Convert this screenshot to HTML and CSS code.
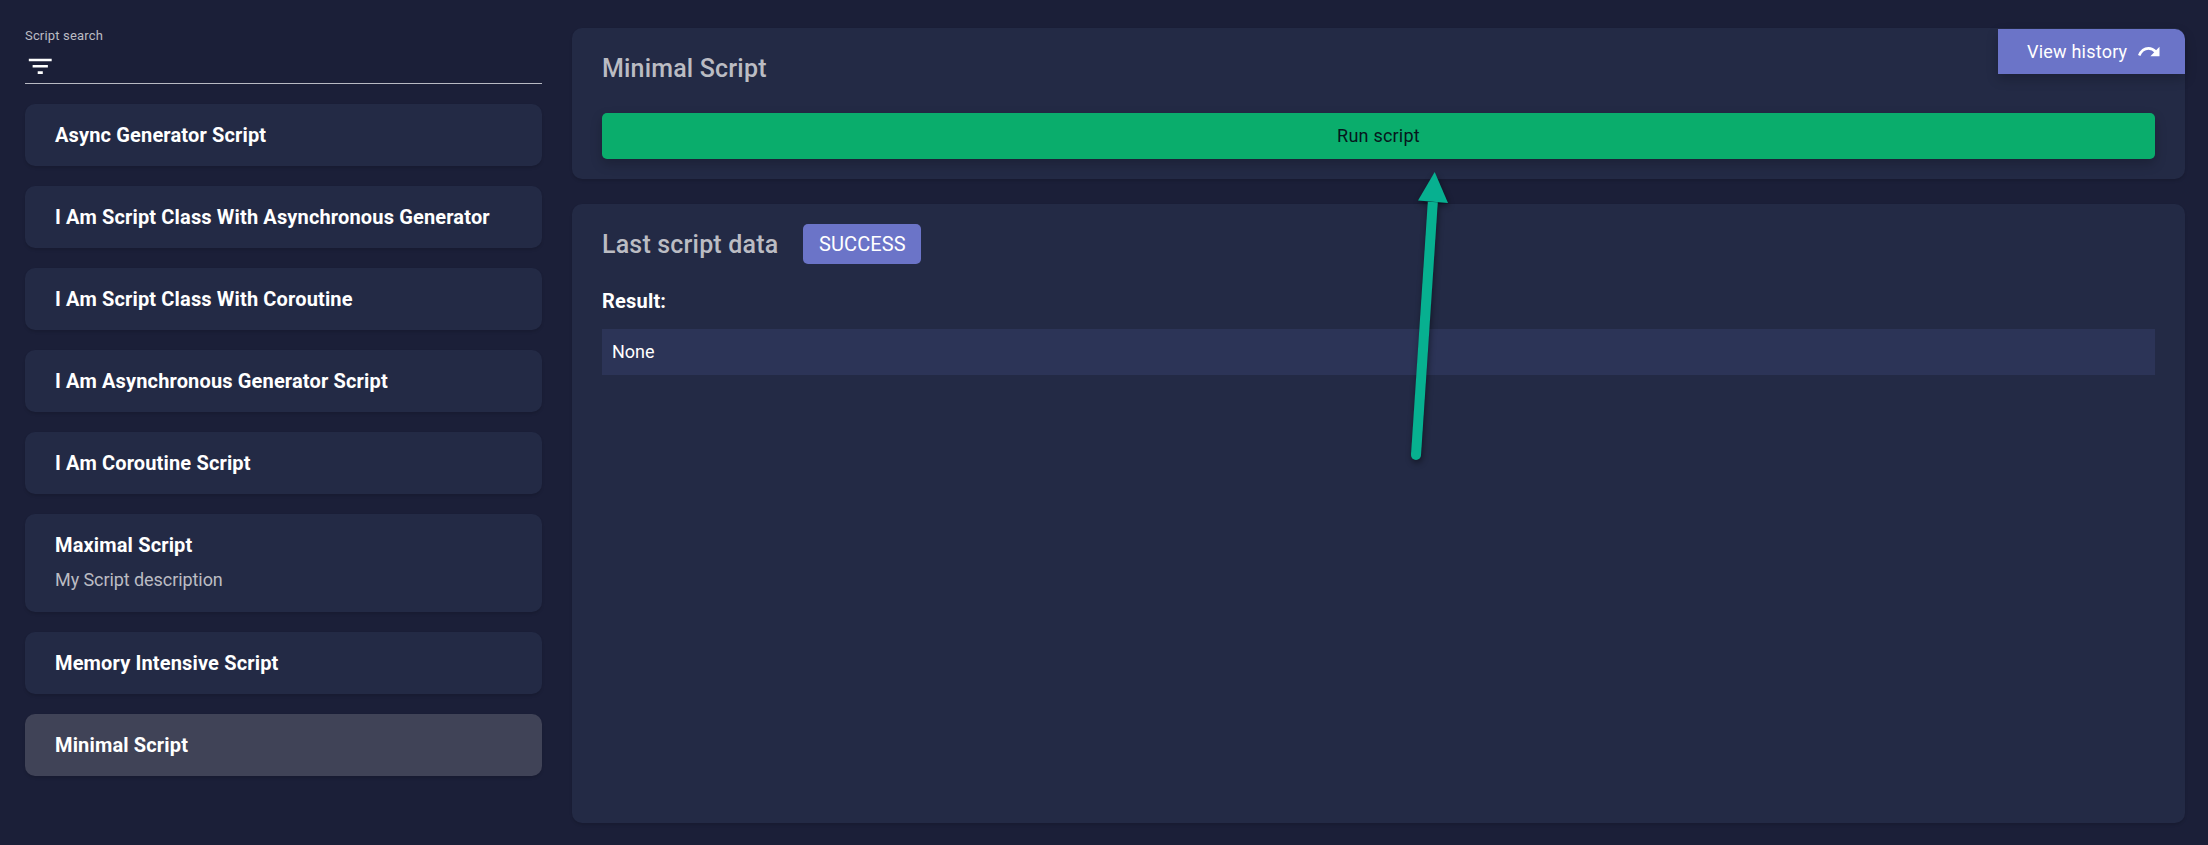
FILE: index.html
```html
<!DOCTYPE html>
<html lang="en">
<head>
<meta charset="utf-8">
<title>Scripts</title>
<link rel="stylesheet" href="styles.css">
</head>
<body>
<div class="page">
  <aside class="sidebar">
    <label class="search">
      <span class="search-label">Script search</span>
      <svg class="filter-icon" viewBox="0 0 24 24"><path d="M10 18h4v-2h-4v2zM3 6v2h18V6H3zm3 7h12v-2H6v2z"/></svg>
    </label>
    <nav class="scripts">
      <a class="script">Async Generator Script</a>
      <a class="script">I Am Script Class With Asynchronous Generator</a>
      <a class="script">I Am Script Class With Coroutine</a>
      <a class="script">I Am Asynchronous Generator Script</a>
      <a class="script">I Am Coroutine Script</a>
      <a class="script">Maximal Script<span class="description">My Script description</span></a>
      <a class="script">Memory Intensive Script</a>
      <a class="script selected">Minimal Script</a>
    </nav>
  </aside>
  <main class="content">
    <section class="panel run-panel">
      <h2 class="title">Minimal Script</h2>
      <button class="run">Run script</button>
      <button class="history"><span>View history</span><svg class="history-icon" viewBox="0 0 22 12"><path d="M1.2 9.6Q4.2 2.4 10.5 2.4Q14.5 2.4 18 6" fill="none" stroke="#fff" stroke-width="2.6"/><path d="M21.5 .8V10.3H12.4z" fill="#fff"/></svg></button>
    </section>
    <section class="panel result-panel">
      <header class="result-head"><h2 class="title">Last script data</h2><span class="badge">SUCCESS</span></header>
      <h3 class="result-label">Result:</h3>
      <div class="result">None</div>
    </section>
  </main>
</div>
<svg class="pointer" viewBox="0 0 60 310"><path d="M32.8 42L16 295" stroke="#07b090" stroke-width="10"/><circle cx="16" cy="295" r="5" fill="#07b090"/><path d="M34.7 12L18 40.5L48 43z" fill="#07b090"/></svg>
</body>
</html>
```
FILE: styles.css
```css
* { box-sizing: border-box; }
body {
  margin: 0;
  background: #1b1f38;
  color: #fff;
  font-family: Roboto, "Liberation Sans", sans-serif;
}
.page {
  display: flex;
  gap: 30px;
  height: 845px;
  padding: 28px 23px 22px 25px;
}
.sidebar { width: 517px; flex: none; }
.search {
  display: flex;
  flex-direction: column;
  height: 56px;
  border-bottom: 1px solid #b8bac3;
}
.search-label { font-size: 13px; line-height: 15px; letter-spacing: .17px; color: #bbbcc3; }
.filter-icon { width: 30.5px; height: 30.5px; margin-top: 7.5px; fill: #fff; }
.scripts { display: flex; flex-direction: column; gap: 20px; margin-top: 20px; }
.script {
  padding: 16px 30px;
  border-radius: 10px;
  background: #232a45;
  box-shadow: 0 2px 3px rgba(0, 0, 0, .12);
  font-size: 20px;
  font-weight: 700;
  line-height: 30px;
  letter-spacing: .15px;
}
.selected { background: #404357; }
.description {
  display: block;
  margin: 7px 0 3px;
  font-size: 18px;
  font-weight: 400;
  line-height: 26px;
  letter-spacing: -.07px;
  color: #bbbcc3;
}
.content { display: flex; flex: 1; flex-direction: column; gap: 25px; }
.panel {
  position: relative;
  border-radius: 10px;
  background: #232a45;
  box-shadow: 0 2px 3px rgba(0, 0, 0, .12);
}
.run-panel { height: 151px; padding: 20px 30px; }
.title { margin: 0; padding-top: 2px; font-size: 25px; font-weight: 500; line-height: 38px; letter-spacing: .18px; color: #bbbcc3; }
.run, .history { border: 0; font-family: inherit; font-size: 18px; letter-spacing: .22px; box-shadow: 0 5px 12px rgba(0, 0, 0, .22); }
.run {
  display: block;
  width: 100%;
  height: 46px;
  margin-top: 25px;
  padding: 0 0 2px;
  border-radius: 5px;
  background: #0aad6c;
  color: #06171c;
}
.history {
  position: absolute;
  top: 1px;
  right: 0;
  display: flex;
  align-items: center;
  gap: 11px;
  width: 187px;
  height: 45px;
  padding: 0 24px 0 29px;
  border-radius: 0 10px 0 0;
  background: #6b74c8;
  color: #fff;
  white-space: nowrap;
}
.history-icon { width: 22px; height: 12px; flex: none; }
.result-panel { flex: 1; padding: 20px 30px; }
.result-head { display: flex; align-items: center; gap: 25px; height: 40px; }
.badge {
  width: 118px;
  height: 40px;
  border-radius: 5px;
  background: #6b74c8;
  font-size: 20px;
  line-height: 40px;
  letter-spacing: .1px;
  text-align: center;
}
.result-label { margin: 22px 0 0; font-size: 20px; font-weight: 700; line-height: 30px; letter-spacing: .2px; }
.result {
  height: 46px;
  margin-top: 13px;
  padding: 0 10px;
  background: #2c3457;
  font-size: 18px;
  line-height: 46px;
}
.pointer {
  position: absolute;
  top: 160px;
  left: 1400px;
  width: 60px;
  height: 310px;
  filter: drop-shadow(1px 3px 3px rgba(0, 0, 0, .45));
  pointer-events: none;
}
```
